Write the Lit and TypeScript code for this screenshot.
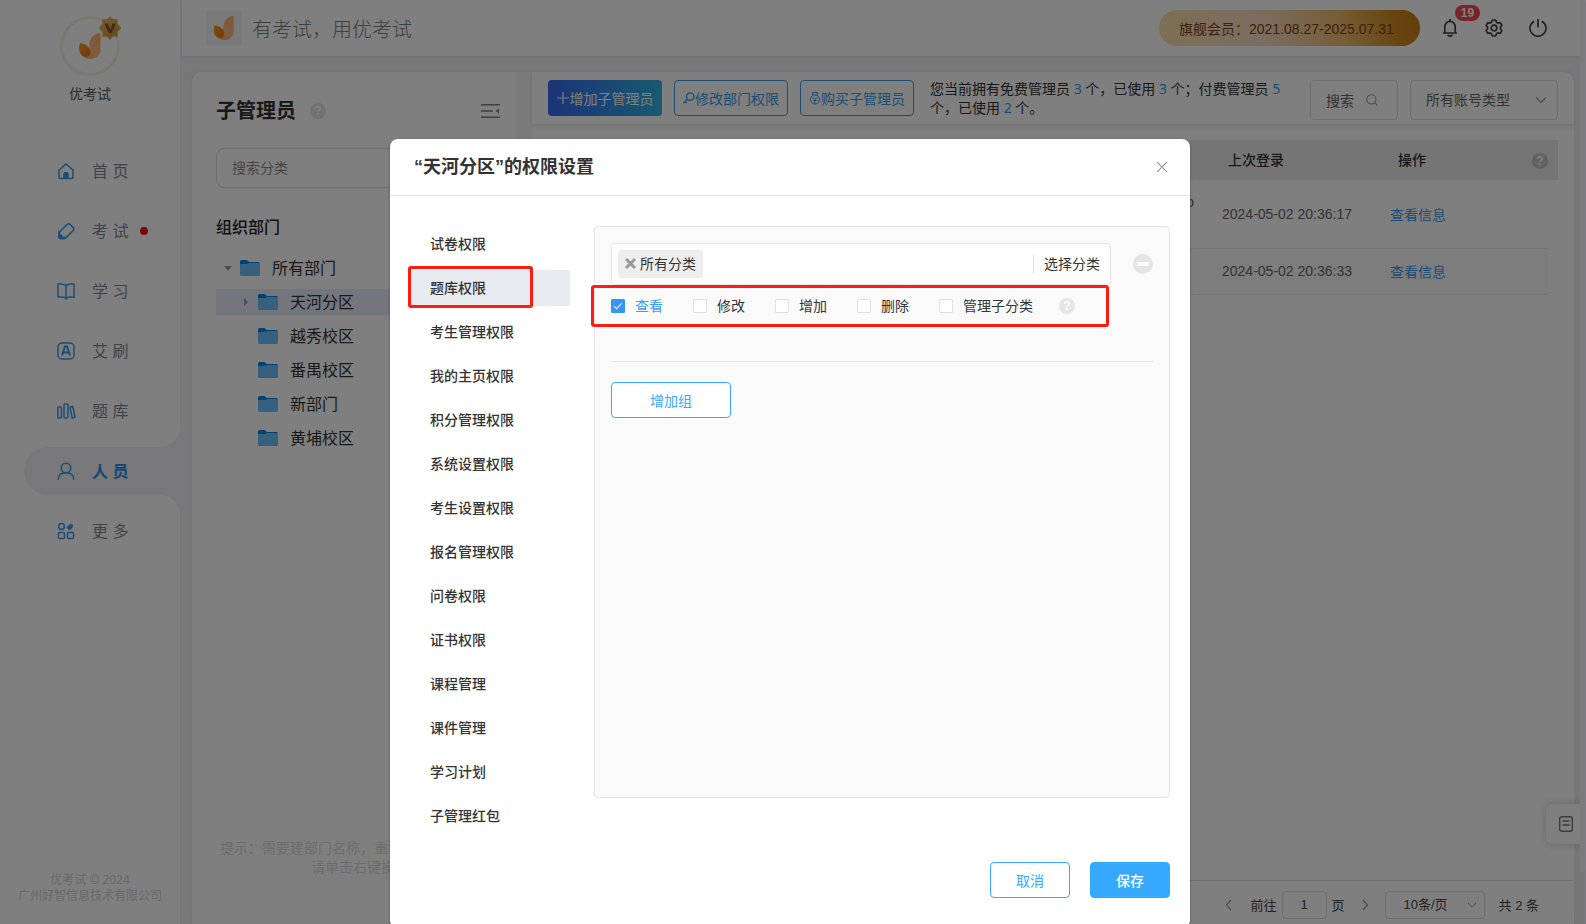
import { LitElement, html, css, svg, nothing } from "lit";
import { customElement, state } from "lit/decorators.js";
import { classMap } from "lit/directives/class-map.js";

const shared = css`
  *, *::before, *::after { box-sizing: border-box; }
  button, input, select { font: inherit; color: inherit; margin: 0; }
  button { cursor: pointer; background: none; border: 0; padding: 0; }
  a { color: inherit; text-decoration: none; }
  svg { display: block; flex: none; }
  h1, h2, h3, p, ul { margin: 0; padding: 0; }
  ul { list-style: none; }
  .help {
    width: 16px; height: 16px; border-radius: 50%; flex: none;
    display: flex; align-items: center; justify-content: center;
    color: #fff; background: #e5e5e5;
    font: 700 12px/16px "Liberation Sans", sans-serif;
  }
`;

const leaf = (size: number) => html`<svg width=${size} height=${size} viewBox="0 0 28 28">
  <defs>
    <linearGradient id="lo" x1="0" y1="0" x2="1" y2="1"><stop offset="0" stop-color="#ff9a1c"/><stop offset="1" stop-color="#e2780c"/></linearGradient>
    <linearGradient id="hi" x1="1" y1="0" x2="0" y2="1"><stop offset="0" stop-color="#ffae62"/><stop offset=".6" stop-color="#ffbb80"/><stop offset="1" stop-color="#f5a05a"/></linearGradient>
  </defs>
  <path d="M23.500 1c.8 0 1 .8 1 2v14.500c0 6-4.500 9.500-10 9.500-3.500 0-6-1-7.500-3l7-4c-.8-2-1-5-.8-8C13.500 6.500 18 1.500 23.500 1z" fill="url(#hi)"/>
  <path d="M4.200 11c5.800.8 10 4.500 10 9.200 0 2.800-1.800 4.600-4.200 4.600C5.500 24.800 3 21 3 16c0-2 .4-3.500 1.200-5z" fill="url(#lo)"/>
</svg>`;

const navIcons: Record<string, unknown> = {
  home: svg`<path d="M2 8.200 9 2l7 6.200V15a1.500 1.500 0 0 1-1.500 1.500h-11A1.500 1.500 0 0 1 2 15z"/><path d="M7 16v-3.500a2 2 0 0 1 4 0V16z" fill="currentColor"/>`,
  exam: svg`<path d="M10.200 2.400a2 2 0 0 1 2.800 0l3.200 3.200a2 2 0 0 1 0 2.800L9 15.600a3 3 0 0 1-2 .9H4a2 2 0 0 1-2-2v-3a3 3 0 0 1 .9-2z"/><path d="M1.800 10.500v4a2 2 0 0 0 2 2H8l1-1-3.200-.2-3-3.300z" fill="currentColor"/>`,
  study: svg`<path d="M9 4C8 2.500 6.500 2 4.500 2H1v13h4c2 0 3.200.5 4 1.800.8-1.300 2-1.800 4-1.800h4V2h-3.500C11.500 2 10 2.500 9 4zM9 4v12.500"/>`,
  brush: svg`<rect x="1" y="1" width="16" height="16" rx="4"/><path d="m5 13.500 3-9h2l3 9M6.500 10.500h5" stroke-width="2"/>`,
  bank: svg`<rect x=".8" y="5" width="3.600" height="11" rx="1"/><rect x="7" y="2" width="4" height="14" rx="1"/><path d="m13 5.200 2.800-.7L18 15.300l-2.800.7z"/>`,
  people: svg`<circle cx="9" cy="6" r="4.800"/><path d="M1.200 17.800c0-4.500 3.200-7 7.800-7s7.800 2.500 7.800 7"/>`,
  more: svg`<circle cx="4.500" cy="4.500" r="2.900"/><rect x="1.500" y="10.500" width="6" height="6" rx="1"/><rect x="10.500" y="10.500" width="6" height="6" rx="1"/><path d="m11 7 3.500-3.500" stroke-width="4.500"/><path d="m14.500 3.500 1-1" stroke-width="3"/>`,
};

const chevron = (d: string, w = 12, h = 12) => html`<svg width=${w} height=${h} viewBox="0 0 12 12" fill="none" stroke="#999" stroke-width="1.200"><path d=${d}/></svg>`;

@customElement("side-nav")
class SideNav extends LitElement {
  static styles = [shared, css`
    :host { display: flex; flex-direction: column; width: 180px; flex: none; background: #fff; }
    .profile { display: flex; flex-direction: column; align-items: center; padding-top: 16px; }
    .avatar { position: relative; width: 60px; height: 60px; border: 3px solid #f7efdf; border-radius: 50%; display: flex; align-items: center; justify-content: center; }
    .medal { position: absolute; right: -5px; top: -3px; }
    .name { margin-top: 8px; font-size: 14px; line-height: 20px; color: #555; }
    nav { margin-top: 43px; display: flex; flex-direction: column; gap: 12px; padding-left: 24px; }
    .item { position: relative; height: 48px; display: flex; align-items: center; gap: 17px; padding-left: 33px; font-size: 16px; color: #818793; border-radius: 24px 0 0 24px; }
    .item span { padding-bottom: 2px; }
    .item svg { color: #3a9be8; }
    .item.on { background: #f0f1f6; color: #2f8de4; font-weight: 700; }
    .item.on::before, .item.on::after { content: ""; position: absolute; right: 0; width: 20px; height: 20px; }
    .item.on::before { top: -20px; background: radial-gradient(circle at 0 0, #fff 20px, #f0f1f6 20px); }
    .item.on::after { bottom: -20px; background: radial-gradient(circle at 0 100%, #fff 20px, #f0f1f6 20px); }
    .dot { width: 8px; height: 8px; border-radius: 50%; background: #f5101c; margin-left: -5px; }
    footer { margin-top: auto; padding-bottom: 20px; text-align: center; font: 12px/16px "Noto Sans", "Noto Sans CJK SC", sans-serif; color: #d2d2d2; }
  `];
  items = [
    ["home", "首 页"], ["exam", "考 试"], ["study", "学 习"], ["brush", "艾 刷"],
    ["bank", "题 库"], ["people", "人 员"], ["more", "更 多"],
  ];
  render() {
    return html`
      <div class="profile">
        <div class="avatar">${leaf(28)}
          <svg class="medal" width="24" height="24" viewBox="0 0 24 24">
            <defs><linearGradient id="md" x1="0" y1="0" x2="1" y2="1"><stop offset="0" stop-color="#e6bf80"/><stop offset="1" stop-color="#c08a2c"/></linearGradient></defs>
            <path d="m12 1 2.800 2.600h4.400v4.600L22.500 12l-3.300 3.800v4.400h-4.400L12 23l-2.800-2.800H4.800v-4.400L1.500 12l3.300-3.800V3.600h4.400z" fill="url(#md)" stroke="#e9b650" stroke-width="1.200" stroke-linejoin="round"/>
            <path d="M6.500 7.500h3.300l2.400 6 2.400-6h3.200L13.600 17h-3z" fill="#8f5410"/>
          </svg>
        </div>
        <div class="name">优考试</div>
      </div>
      <nav>${this.items.map(([id, label]) => html`
        <a href="#${id}" class=${classMap({ item: true, on: id === "people" })}>
          <svg width="18" height="18" viewBox="0 0 18 18" fill="none" stroke="currentColor" stroke-width="1.500" overflow="visible">${navIcons[id]}</svg>
          <span>${label}</span>${id === "exam" ? html`<i class="dot"></i>` : nothing}
        </a>`)}
      </nav>
      <footer>优考试 © 2024<br />广州好智信息技术有限公司</footer>`;
  }
}

@customElement("top-bar")
class TopBar extends LitElement {
  static styles = [shared, css`
    :host { display: flex; align-items: center; height: 56px; flex: none; background: #fff; margin-left: 2px; padding: 0 39px 0 24px; box-shadow: 0 1px 4px #dcdce4; }
    .logo { width: 36px; height: 36px; background: #f5f5f5; display: flex; align-items: center; justify-content: center; }
    .slogan { margin-left: 10px; font-size: 20px; font-weight: 300; color: #808080; }
    .vip { margin-left: auto; height: 36px; width: 261px; padding-left: 20px; border-radius: 18px; display: flex; align-items: center; font-size: 14px; color: #7a4310; background: linear-gradient(75deg, #fbdfa8 0%, #f6dcc4 38%, #eebd72 68%, #d08a1e 90%, #c27a10 100%); }
    .icons { display: flex; gap: 26px; margin-left: 21px; color: #444; }
    .icons button { position: relative; }
    .badge { position: absolute; left: 14px; top: -14px; min-width: 25px; height: 16px; border-radius: 8px; background: #f2484f; color: #fff; font-size: 12px; font-weight: 700; line-height: 16px; text-align: center; }
  `];
  render() {
    return html`
      <div class="logo">${leaf(26)}</div>
      <div class="slogan">有考试，用优考试</div>
      <div class="vip">旗舰会员：2021.08.27-2025.07.31</div>
      <div class="icons">
        <button aria-label="消息">
          <svg width="18" height="18" viewBox="0 0 18 18" fill="none" stroke="currentColor" stroke-width="1.700"><path d="M2 14h14M3.800 14V7.500a5.200 5.200 0 0 1 10.400 0V14M9 0v2.500M7 15.500a2 1.600 0 0 0 4 0"/></svg>
          <span class="badge">19</span>
        </button>
        <button aria-label="设置">
          <svg width="18" height="18" viewBox="0 0 18 18" fill="none" stroke="currentColor" stroke-width="1.700" stroke-linejoin="round"><path d="M7.300 1h3.400l.7 2.200 1.500.9 2.300-.5 1.700 2.900L15.400 8.200v1.600l1.500 1.700-1.700 2.900-2.300-.5-1.500.9-.7 2.200H7.300l-.7-2.200-1.500-.9-2.300.5-1.700-2.900 1.500-1.700V8.200L1.100 6.500l1.700-2.900 2.300.5 1.500-.9z"/><circle cx="9" cy="9" r="2.800"/></svg>
        </button>
        <button aria-label="退出">
          <svg width="18" height="18" viewBox="0 0 18 18" fill="none" stroke="currentColor" stroke-width="1.700"><path d="M5.200 2.200a8 8 0 1 0 7.600 0M9 0v8.500"/></svg>
        </button>
      </div>`;
  }
}

@customElement("department-panel")
class DepartmentPanel extends LitElement {
  static styles = [shared, css`
    :host { display: flex; flex-direction: column; width: 324px; flex: none; background: #fff; border-radius: 10px 0 0 0; padding: 24px 12px 47px 24px; }
    .head { display: flex; align-items: center; height: 30px; padding-right: 4px; }
    h1 { font-size: 20px; line-height: 30px; color: #333; font-weight: 700; }
    .help { margin-left: 14px; }
    .fold { margin-left: auto; }
    .search { margin-top: 22px; height: 40px; width: 100%; border: 1px solid #dcdcdc; border-radius: 8px; background: #fff; padding: 0 15px; font-size: 14px; }
    .search::placeholder { color: #8a8a8a; opacity: 1; }
    h2 { margin-top: 28px; font-size: 16px; line-height: 24px; font-weight: 500; color: #222; }
    .tree { margin-top: 15px; display: flex; flex-direction: column; gap: 8px; }
    .node { height: 26px; display: flex; align-items: center; gap: 7px; padding-left: 7px; font-size: 16px; color: #333; }
    .node.child { padding-left: 25px; }
    .node.on { background: #e6effb; }
    .node span { margin-left: 5px; padding-bottom: 2px; }
    .hint { margin-top: auto; text-align: center; font-size: 14px; line-height: 19px; color: #dadada; }
  `];
  nodes = [
    { name: "所有部门", caret: "M1 3h8L5 8z", root: true },
    { name: "天河分区", caret: "M3 1v8l4-4z", on: true },
    { name: "越秀校区" }, { name: "番禺校区" }, { name: "新部门" }, { name: "黄埔校区" },
  ] as { name: string; caret?: string; root?: boolean; on?: boolean }[];
  render() {
    return html`
      <div class="head">
        <h1>子管理员</h1><span class="help">?</span>
        <button class="fold" aria-label="收起"><svg width="19" height="16" viewBox="0 0 19 16"><path d="M0 1.800h19M0 8h12M0 14.200h19" stroke="#808080" stroke-width="1.600"/><path d="M18 5.500v5L14.500 8z" fill="#808080"/></svg></button>
      </div>
      <input class="search" type="text" placeholder="搜索分类" aria-label="搜索分类" />
      <h2>组织部门</h2>
      <ul class="tree">${this.nodes.map((n) => html`
        <li class=${classMap({ node: true, child: !n.root, on: !!n.on })}>
          <svg width="10" height="10" viewBox="0 0 10 10"><path d=${n.caret ?? ""} fill="#999"/></svg>
          <svg width="20" height="16" viewBox="0 0 20 16"><path d="M0 1.500A1.500 1.500 0 0 1 1.500 0h5L9 2h9.500A1.500 1.500 0 0 1 20 3.500V8H0z" fill="#0084e0"/><path d="M0 4.500 1 4h6l2-1h11v11.500a1.500 1.500 0 0 1-1.500 1.500h-17A1.500 1.500 0 0 1 0 14.500z" fill="#6cc0fc"/></svg>
          <span>${n.name}</span>
        </li>`)}
      </ul>
      <p class="hint">提示：需要建部门名称，重命名，删除部门，<br />请单击右键操作</p>`;
  }
}

@customElement("admin-list")
class AdminList extends LitElement {
  static styles = [shared, css`
    :host { display: flex; flex-direction: column; flex: 1; min-width: 0; background: #fff; border-radius: 0 10px 0 0; }
    .bar { display: flex; align-items: flex-start; gap: 12px; height: 52px; padding: 8px 16px; box-shadow: 0 2px 5px #e2e2e2; font-size: 14px; border-radius: 0 10px 0 0; }
    .btn { width: 114px; height: 36px; flex: none; border: 1px solid #3a9be8; border-radius: 4px; color: #3a9be8; display: flex; align-items: center; justify-content: center; white-space: nowrap; }
    .btn.main { border: 0; color: #fff; background: linear-gradient(90deg, #3868f0, #30b4e0); }
    .quota { flex: 1; min-width: 0; margin: -1px 0 0 4px; line-height: 19px; color: #333; font-family: "Noto Sans", "Noto Sans CJK SC", sans-serif; }
    .quota b { font-weight: 400; color: #3a9be8; }
    .box { height: 40px; flex: none; border: 1px solid #dcdcdc; border-radius: 4px; color: #666; background: #fff; padding: 0 15px; }
    .find { width: 88px; display: flex; align-items: center; gap: 12px; padding-bottom: 1px; }
    .pick { position: relative; flex: none; }
    .pick select { width: 148px; appearance: none; display: block; }
    .pick svg { position: absolute; right: 11px; top: 14px; pointer-events: none; }
    .grid { display: flex; align-items: flex-start; padding: 16px 16px 0; }
    .gutter { width: 10px; height: 40px; background: #eaeaea; }
    table { flex: 1; table-layout: fixed; border-collapse: collapse; font-size: 14px; color: #666; width: 0; }
    th { height: 40px; background: #eaeaea; text-align: left; font-weight: 500; color: #333; padding: 0 0 2px 18px; }
    th.act { padding-left: 20px; }
    th .help { margin: 4px 0 0 auto; background: #c4c4c4; }
    .th { display: flex; align-items: center; }
    .mail { width: auto; text-align: right; padding-right: 16px; vertical-align: top; padding-top: 14px; }
    .time { width: 168px; }
    .act { width: 170px; }
    td { padding: 0 0 0 12px; border-bottom: 1px solid #ebebeb; height: 46px; }
    tr.tall td { height: 68px; }
    tr.alt td { background: #fafafa; }
    td a { color: #3a9be8; }
    .pager { margin-top: auto; height: 44px; border-top: 1px solid #dcdcdc; padding: 4px 35px 0 0; display: flex; align-items: center; justify-content: flex-end; font-size: 13px; color: #444; }
    .pager label { display: flex; align-items: center; gap: 5px; margin: 0 14px 0 16px; }
    .pager input { width: 45px; height: 28px; border: 1px solid #dcdcdc; border-radius: 4px; background: #fff; text-align: center; }
    .pager .pick { margin: 0 14px; }
    .pager select { width: 100px; height: 28px; border: 1px solid #dcdcdc; border-radius: 4px; background: #fff; padding: 0 18px; }
    .pager .pick svg { right: 8px; top: 9px; }
  `];
  render() {
    return html`
      <div class="bar">
        <button class="btn main"><svg width="13" height="14" viewBox="0 0 13 14" stroke="#fff" stroke-width="1.200"><path d="M0 7h12M6 1v12"/></svg>增加子管理员</button>
        <button class="btn"><svg width="12" height="12" viewBox="0 0 12 12" fill="none" stroke="currentColor" stroke-width="1.300"><circle cx="7.200" cy="4.600" r="3.700"/><path d="M4.500 7.300.5 11M2.200 9.500l1.500 1.700"/></svg>修改部门权限</button>
        <button class="btn"><svg width="12" height="14" viewBox="0 0 12 14" fill="none" stroke="currentColor"><path d="M4 5 3.500 1.500h5L8 5"/><circle cx="6" cy="8.500" r="4.500"/><path d="m4 6.500 2 2 2-2M6 8.500V12M4.300 9.500h3.400" /></svg>购买子管理员</button>
        <p class="quota">您当前拥有免费管理员 <b>3</b> 个，已使用 <b>3</b> 个；付费管理员 <b>5</b> 个，已使用 <b>2</b> 个。</p>
        <button class="box find">搜索<svg width="12" height="12" viewBox="0 0 13 13" fill="none" stroke="#999" stroke-width="1.200"><circle cx="5.800" cy="5.800" r="5"/><path d="m9.500 9.500 3 3"/></svg></button>
        <div class="pick"><select class="box" aria-label="账号类型"><option>所有账号类型</option></select>${chevron("M1 3.500 6 8.500l5-5")}</div>
      </div>
      <div class="grid">
        <table>
          <thead><tr><th class="mail"></th><th class="time">上次登录</th><th class="act"><div class="th">操作<span class="help">?</span></div></th></tr></thead>
          <tbody>
            <tr class="tall"><td class="mail">o</td><td>2024-05-02 20:36:17</td><td><a href="#info-1">查看信息</a></td></tr>
            <tr class="alt"><td class="mail"></td><td>2024-05-02 20:36:33</td><td><a href="#info-2">查看信息</a></td></tr>
          </tbody>
        </table>
        <div class="gutter"></div>
      </div>
      <div class="pager">
        <button aria-label="上一页">${chevron("M8 1 3.500 6 8 11")}</button>
        <label>前往<input type="text" value="1" />页</label>
        <button aria-label="下一页">${chevron("M4 1l4.500 5L4 11")}</button>
        <div class="pick"><select aria-label="每页条数"><option>10条/页</option></select>${chevron("M1 3.500 6 8.500l5-5", 10, 10)}</div>
        <span>共 2 条</span>
      </div>`;
  }
}

@customElement("permission-dialog")
class PermissionDialog extends LitElement {
  static styles = [shared, css`
    :host { display: block; width: 800px; max-width: 100%; background: #fff; border-radius: 8px; color: #333; font-size: 14px; box-shadow: 0 1px 3px rgba(0, 0, 0, .3); }
    header { height: 57px; border-bottom: 1px solid #e4e4e4; display: flex; align-items: center; justify-content: space-between; padding: 0 23px 0 24px; }
    h2 { font-size: 18px; line-height: 26px; font-weight: 700; }
    .body { display: flex; gap: 24px; padding: 30px 20px 0; align-items: flex-start; }
    .tabs { width: 160px; flex: none; display: flex; flex-direction: column; gap: 8px; }
    .tab { position: relative; height: 36px; border-radius: 4px; padding: 0 0 2px 20px; text-align: left; font-weight: 500; }
    .tab.on { background: #e8ebef; }
    .tab.on::after { content: ""; position: absolute; left: -2px; top: -4px; right: 37px; bottom: -2px; border: 3px solid #ff1c12; border-radius: 3px; }
    .pane { flex: 1; min-width: 0; min-height: 572px; background: #fafafa; border: 1px solid #e5e5e5; border-radius: 4px; padding: 16px; }
    .row { display: flex; align-items: center; justify-content: space-between; }
    .scope { width: 500px; height: 42px; background: #fff; border: 1px solid #e5e5e5; border-radius: 4px; display: flex; align-items: center; justify-content: space-between; padding: 0 10px 0 6px; }
    .tag { height: 28px; background: #eee; border-radius: 4px; display: flex; align-items: center; gap: 4px; padding: 0 7px; }
    .tag span { padding-bottom: 2px; }
    .tag button { width: 11px; }
    .choose { border-left: 1px solid #e0e0e0; padding-left: 10px; line-height: 18px; }
    .minus { width: 20px; height: 20px; border-radius: 50%; background: #e5e5e5; display: flex; align-items: center; justify-content: center; }
    .minus i { width: 12px; height: 4px; background: #fff; }
    .rights { position: relative; display: flex; align-items: center; height: 43px; margin-right: 40px; }
    .rights::after { content: ""; position: absolute; left: -20px; top: 0; right: 4px; bottom: 1px; border: 3px solid #ff1c12; border-radius: 3px; pointer-events: none; }
    .right { display: flex; align-items: center; gap: 10px; margin-right: 30px; }
    .right span { padding-bottom: 2px; }
    .right.on { color: #3a9bff; }
    .right input { appearance: none; width: 14px; height: 14px; border: 1px solid #e0e0e0; border-radius: 1px; background: #fff; display: grid; place-items: center; }
    .right input:checked { background: #3296fa; border-color: #3296fa; }
    .right input:checked::before { content: ""; width: 8px; height: 4px; border: solid #fff; border-width: 0 0 1px 1px; transform: translateY(-1px) rotate(-45deg); }
    .rights .help { margin-left: -4px; }
    hr { border: 0; border-top: 1px solid #e5e5e5; margin: 33px 0 20px; }
    .btn { height: 36px; border: 1px solid #36a9ff; border-radius: 4px; color: #36a9ff; background: #fff; }
    .add { width: 120px; }
    .foot { display: flex; justify-content: flex-end; gap: 20px; padding: 28px 20px 30px; }
    .foot .btn { width: 80px; }
    .foot .save { background: #36a9ff; color: #fff; font-weight: 500; }
  `];
  @state() tab = "题库权限";
  tabs = ["试卷权限", "题库权限", "考生管理权限", "我的主页权限", "积分管理权限", "系统设置权限", "考生设置权限",
    "报名管理权限", "问卷权限", "证书权限", "课程管理", "课件管理", "学习计划", "子管理红包"];
  rights = ["查看", "修改", "增加", "删除", "管理子分类"];
  render() {
    return html`
      <header>
        <h2>“天河分区”的权限设置</h2>
        <button aria-label="关闭"><svg width="10" height="10" viewBox="0 0 10 10" stroke="#999" stroke-width="1.200"><path d="m0 0 10 10M10 0 0 10"/></svg></button>
      </header>
      <div class="body">
        <div class="tabs">${this.tabs.map((t) => html`
          <button class=${classMap({ tab: true, on: t === this.tab })} @click=${() => (this.tab = t)}>${t}</button>`)}
        </div>
        <section class="pane">
          <div class="row">
            <div class="scope">
              <span class="tag"><button aria-label="移除"><svg width="11" height="11" viewBox="0 0 11 11" stroke="#999" stroke-width="3"><path d="m1 1 9 9M10 1 1 10"/></svg></button><span>所有分类</span></span>
              <button class="choose">选择分类</button>
            </div>
            <button class="minus" aria-label="删除组"><i></i></button>
          </div>
          <div class="rights">
            ${this.rights.map((r, i) => html`<label class=${classMap({ right: true, on: i === 0 })}><input type="checkbox" ?checked=${i === 0} /><span>${r}</span></label>`)}
            <span class="help">?</span>
          </div>
          <hr />
          <button class="btn add">增加组</button>
        </section>
      </div>
      <div class="foot"><button class="btn">取消</button><button class="btn save">保存</button></div>`;
  }
}

@customElement("app-root")
class AppRoot extends LitElement {
  static styles = [shared, css`
    :host { display: block; position: relative; height: 100vh; overflow: hidden; background: #f0f1f6; font-family: "Liberation Sans", "Noto Sans CJK SC", sans-serif; }
    .shell { display: flex; height: 100%; }
    main { flex: 1; min-width: 0; display: flex; flex-direction: column; }
    .work { flex: 1; min-height: 0; display: flex; gap: 16px; margin: 16px 12px 0; background: #f4f4f4; border-radius: 10px 10px 0 0; box-shadow: 0 0 6px #e0e1e8; }
    .thumb { position: absolute; right: 0; top: 0; width: 6px; height: 872px; border-radius: 3px; background: #f8f9fe; }
    .note { position: absolute; right: 0; bottom: 80px; width: 40px; height: 40px; border-radius: 6px 0 0 6px; background: #fff; box-shadow: 0 0 8px #ccc; display: flex; align-items: center; justify-content: center; }
    .mask { position: absolute; inset: 0; overflow: hidden; background: rgba(0, 0, 0, .5); display: flex; align-items: flex-start; justify-content: center; padding-top: 15vh; padding-right: 6px; }
  `];
  render() {
    return html`
      <div class="shell">
        <side-nav></side-nav>
        <main>
          <top-bar></top-bar>
          <div class="work"><department-panel></department-panel><admin-list></admin-list></div>
        </main>
      </div>
      <button class="note" aria-label="笔记"><svg width="14" height="16" viewBox="0 0 14 16" fill="none" stroke="#777" stroke-width="1.400"><rect x=".7" y=".7" width="12.600" height="14.600" rx="2"/><path d="M3.500 5h7M3.500 9h7"/></svg></button>
      <div class="thumb"></div>
      <div class="mask"><permission-dialog role="dialog"></permission-dialog></div>`;
  }
}
